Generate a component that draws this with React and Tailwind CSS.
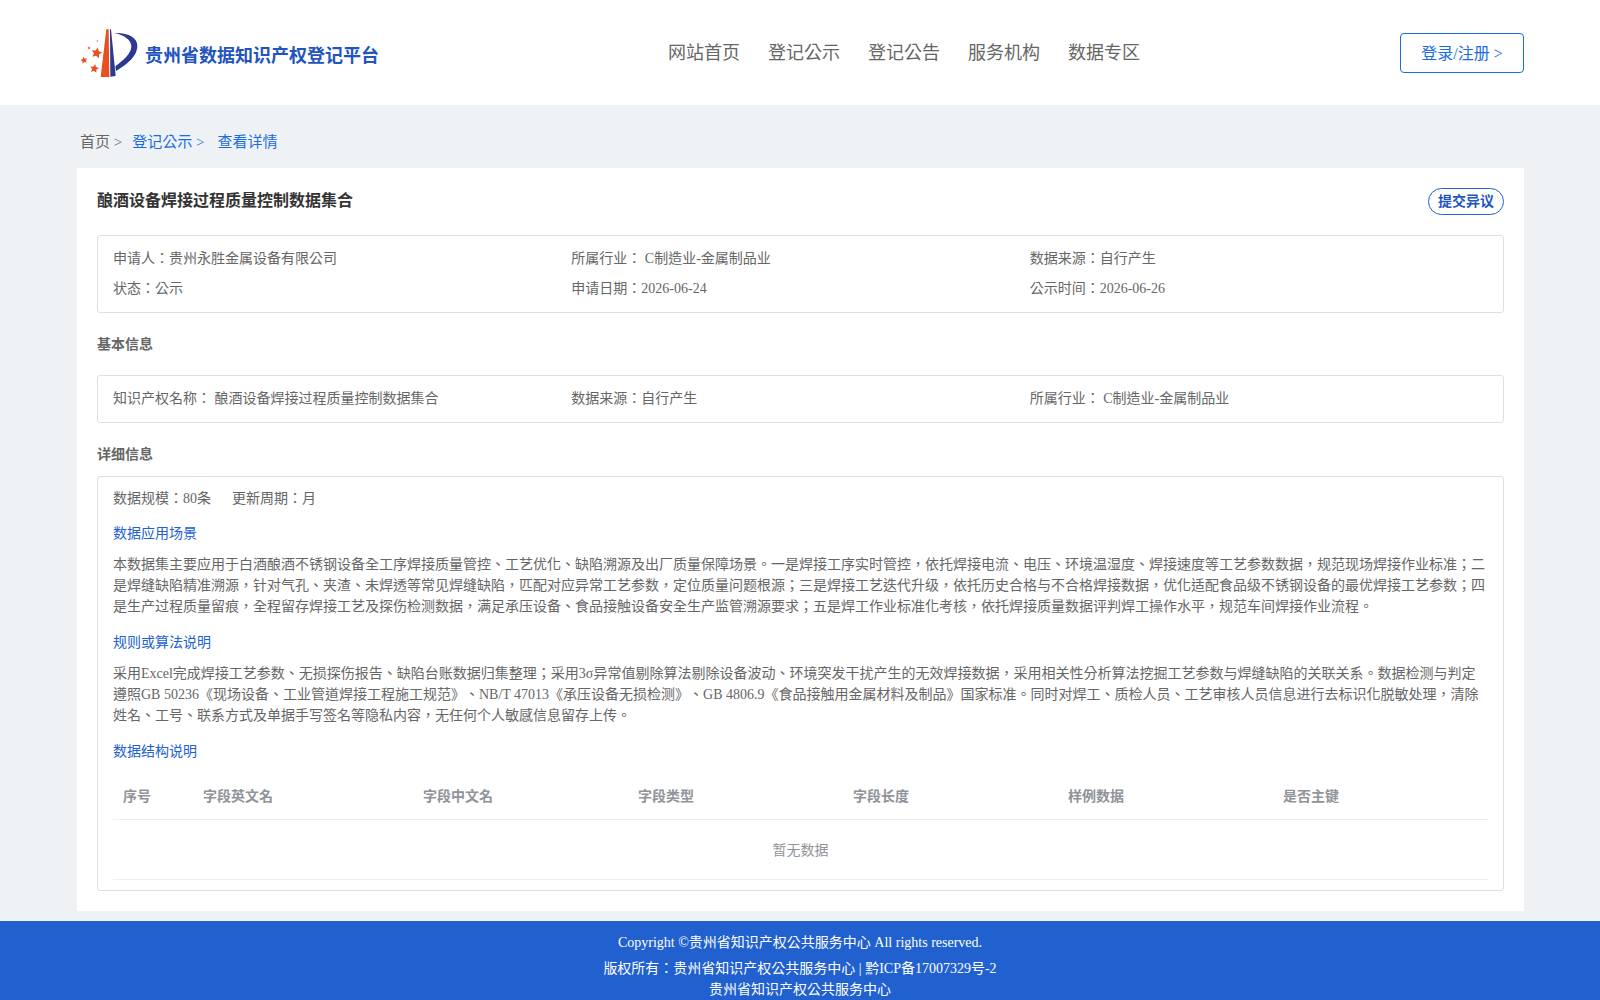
import React from "react";

const navItems = ["网站首页", "登记公示", "登记公告", "服务机构", "数据专区"];
const columns = [
  { label: "序号", width: "w-[80px]" },
  { label: "字段英文名", width: "w-[220px]" },
  { label: "字段中文名", width: "w-[215px]" },
  { label: "字段类型", width: "w-[215px]" },
  { label: "字段长度", width: "w-[215px]" },
  { label: "样例数据", width: "w-[215px]" },
  { label: "是否主键", width: "flex-1" },
];

const starPoints = (cx, cy, r, rot) => {
  const pts = [];
  for (let i = 0; i < 10; i++) {
    const rad = i % 2 === 0 ? r : r * 0.48;
    const a = ((rot + i * 36 - 90) * Math.PI) / 180;
    pts.push(`${cx + rad * Math.cos(a)},${cy + rad * Math.sin(a)}`);
  }
  return pts.join(" ");
};

// drawn in the units of a 3x crop, hence the odd viewBox
const Logo = () => (
  <svg width="60" height="52" viewBox="60 50 180 156" className="shrink-0">
    <path d="M122 200 L139 57 L146 57 L148 200 Z" fill="#e8501f" />
    <path d="M150 57 L153 57 L167 197 L151 199 Z" fill="#2a3a94" />
    <path d="M162 68 C205 66 232 82 232 106 C232 140 196 165 168 182 L166 168 C190 150 214 130 214 108 C214 88 192 74 162 68 Z" fill="#2a3a94" />
    <polygon points={starPoints(110, 128, 17, 12)} fill="#e8501f" />
    <polygon points={starPoints(72, 150, 11, -12)} fill="#e8501f" />
    <polygon points={starPoints(103, 175, 14, 10)} fill="#e8501f" />
    <circle cx="87" cy="113" r="4" fill="#ee7a50" />
    <circle cx="112" cy="92" r="2.5" fill="#ee7a50" />
  </svg>
);

const Panel = ({ className = "", children }) => (
  <div className={`rounded-[3px] border border-[#dcdfe6] ${className}`}>{children}</div>
);

const SectionLink = ({ children }) => (
  <div className="text-[14px] leading-[20px] text-[#2060d0]">{children}</div>
);

const App = () => {
  return (
    <div className="h-[1000px] overflow-hidden bg-[#eff2f5] font-['Liberation_Serif','Noto_Sans_CJK_TC',serif] [text-spacing-trim:space-all]">
      <header className="h-[105px] bg-white">
        <div className="ml-[77px] flex h-full w-[1447px] items-center">
          <div className="flex w-[591px] items-center pl-[3px]">
            <Logo />
            <span className="ml-[5px] mt-[8px] text-[18px] font-bold text-[#2254c0]">贵州省数据知识产权登记平台</span>
          </div>
          <nav className="flex gap-[28px] pt-[2px] text-[18px] text-[#666666]">
            {navItems.map((item) => (
              <span key={item}>{item}</span>
            ))}
          </nav>
          <button className="ml-auto h-[40px] w-[124px] rounded-[4px] border border-[#1a6de0] pt-[2px] text-[16px] text-[#1a6de0]">
            登录/注册 &gt;
          </button>
        </div>
      </header>

      <div className="ml-[77px] w-[1447px]">
        <div className="flex h-[63px] items-center pl-[3px] pt-[11px] text-[15px]">
          <span className="text-[#666666]">首页 &gt;</span>
          <span className="ml-[10px] text-[#1a6de0]">登记公示 &gt;</span>
          <span className="ml-[13px] text-[#1a6de0]">查看详情</span>
        </div>

        <main className="h-[743px] bg-white px-[20px] pt-[20px]">
          <div className="flex h-[26px] items-center justify-between">
            <h1 className="text-[16px] font-bold text-[#333333]">酿酒设备焊接过程质量控制数据集合</h1>
            <button className="h-[27px] w-[76px] rounded-[14px] border border-[#2060d0] text-[14px] font-bold text-[#2254c0]">
              提交异议
            </button>
          </div>

          <Panel className="mt-[21px] h-[78px] px-[15px] pt-[8px] text-[14px] leading-[30px] text-[#666666]">
            <div className="grid grid-cols-3">
              <div>申请人：贵州永胜金属设备有限公司</div>
              <div>所属行业： C制造业-金属制品业</div>
              <div>数据来源：自行产生</div>
              <div>状态：公示</div>
              <div>申请日期：2026-06-24</div>
              <div>公示时间：2026-06-26</div>
            </div>
          </Panel>

          <h2 className="mt-[22px] text-[14px] font-bold leading-[20px] text-[#666666]">基本信息</h2>

          <Panel className="mt-[20px] h-[48px] px-[15px] pt-[8px] text-[14px] leading-[30px] text-[#666666]">
            <div className="grid grid-cols-3">
              <div>知识产权名称： 酿酒设备焊接过程质量控制数据集合</div>
              <div>数据来源：自行产生</div>
              <div>所属行业： C制造业-金属制品业</div>
            </div>
          </Panel>

          <h2 className="mt-[22px] text-[14px] font-bold leading-[20px] text-[#666666]">详细信息</h2>

          <Panel className="mt-[11px] h-[415px] px-[15px] pt-[12px] text-[14px] text-[#666666]">
            <div className="flex gap-[21px] leading-[20px]">
              <span>数据规模：80条</span>
              <span>更新周期：月</span>
            </div>

            <div className="mt-[15px]">
              <SectionLink>数据应用场景</SectionLink>
            </div>
            <p className="mt-[10px] leading-[21px]">
              本数据集主要应用于白酒酿酒不锈钢设备全工序焊接质量管控、工艺优化、缺陷溯源及出厂质量保障场景。一是焊接工序实时管控，依托焊接电流、电压、环境温湿度、焊接速度等工艺参数数据，规范现场焊接作业标准；二是焊缝缺陷精准溯源，针对气孔、夹渣、未焊透等常见焊缝缺陷，匹配对应异常工艺参数，定位质量问题根源；三是焊接工艺迭代升级，依托历史合格与不合格焊接数据，优化适配食品级不锈钢设备的最优焊接工艺参数；四是生产过程质量留痕，全程留存焊接工艺及探伤检测数据，满足承压设备、食品接触设备安全生产监管溯源要求；五是焊工作业标准化考核，依托焊接质量数据评判焊工操作水平，规范车间焊接作业流程。
            </p>

            <div className="mt-[16px]">
              <SectionLink>规则或算法说明</SectionLink>
            </div>
            <p className="mt-[10px] leading-[21px]">
              采用Excel完成焊接工艺参数、无损探伤报告、缺陷台账数据归集整理；采用3σ异常值剔除算法剔除设备波动、环境突发干扰产生的无效焊接数据，采用相关性分析算法挖掘工艺参数与焊缝缺陷的关联关系。数据检测与判定遵照GB 50236《现场设备、工业管道焊接工程施工规范》、NB/T 47013《承压设备无损检测》、GB 4806.9《食品接触用金属材料及制品》国家标准。同时对焊工、质检人员、工艺审核人员信息进行去标识化脱敏处理，清除姓名、工号、联系方式及单据手写签名等隐私内容，无任何个人敏感信息留存上传。
            </p>

            <div className="mt-[16px]">
              <SectionLink>数据结构说明</SectionLink>
            </div>

            <div className="mt-[10px] flex h-[48px] items-center border-b border-[#ebeef5] pl-[10px] pt-[2px] font-bold text-[#909399]">
              {columns.map((col) => (
                <div key={col.label} className={col.width}>{col.label}</div>
              ))}
            </div>
            <div className="flex h-[60px] items-center justify-center border-b border-[#ebeef5] pt-[2px] text-[#909399]">
              暂无数据
            </div>
          </Panel>
        </main>
      </div>

      <footer className="mt-[10px] h-[79px] bg-[#2160cf] pt-[10px] text-center text-[14px] text-white">
        <div className="leading-[24px]">Copyright ©贵州省知识产权公共服务中心 All rights reserved.</div>
        <div className="leading-[20px] mt-[4px]">版权所有：贵州省知识产权公共服务中心 | 黔ICP备17007329号-2</div>
        <div className="leading-[21px]">贵州省知识产权公共服务中心</div>
      </footer>
    </div>
  );
};

export default App;
